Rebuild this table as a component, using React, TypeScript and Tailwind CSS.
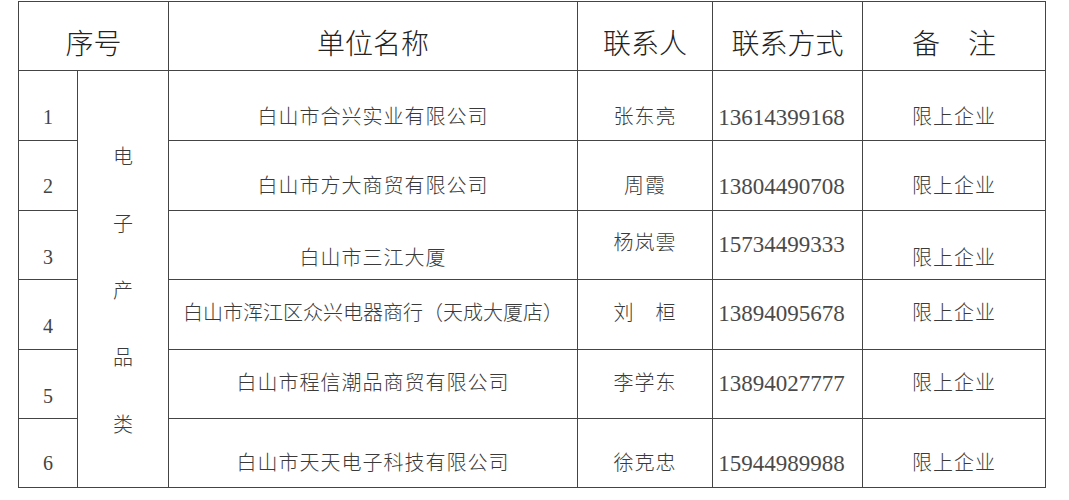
const serif = "font-[family-name:'Liberation_Serif','Noto_Sans_CJK_SC',serif]";

type Row = {
  no: string;
  name: string;
  person: string;
  phone: string;
  note: string;
  // padding-top for each cell (number, name, person, phone, note)
  pad: [string, string, string, string, string];
};

const rows: Row[] = [
  { no: '1', name: '白山市合兴实业有限公司', person: '张东亮', phone: '13614399168', note: '限上企业', pad: ['pt-[36px]', 'pt-[36px]', 'pt-[36px]', 'pt-[35px]', 'pt-[36px]'] },
  { no: '2', name: '白山市方大商贸有限公司', person: '周霞', phone: '13804490708', note: '限上企业', pad: ['pt-[35px]', 'pt-[35px]', 'pt-[35px]', 'pt-[34px]', 'pt-[35px]'] },
  { no: '3', name: '白山市三江大厦', person: '杨岚雲', phone: '15734499333', note: '限上企业', pad: ['pt-[36px]', 'pt-[37px]', 'pt-[22px]', 'pt-[22px]', 'pt-[37px]'] },
  { no: '4', name: '白山市浑江区众兴电器商行（天成大厦店）', person: '刘　桓', phone: '13894095678', note: '限上企业', pad: ['pt-[36px]', 'pt-[23px]', 'pt-[23px]', 'pt-[22px]', 'pt-[23px]'] },
  { no: '5', name: '白山市程信潮品商贸有限公司', person: '李学东', phone: '13894027777', note: '限上企业', pad: ['pt-[36px]', 'pt-[23px]', 'pt-[23px]', 'pt-[22px]', 'pt-[23px]'] },
  { no: '6', name: '白山市天天电子科技有限公司', person: '徐克忠', phone: '15944989988', note: '限上企业', pad: ['pt-[34px]', 'pt-[34px]', 'pt-[34px]', 'pt-[33px]', 'pt-[34px]'] },
];

const cell = 'flex justify-center border-r border-b border-[#444]';
const body = 'text-[20px] leading-none tracking-[1px] text-[#3a3a3a] font-light';
const head = 'text-[28px] leading-none text-[#222] font-light pt-[29px]';

export default function App() {
  return (
    <div className={`w-[1069px] h-[500px] bg-white pt-px pl-[18px] ${serif}`}>
      <div className="grid w-[1028px] grid-cols-[59px_91px_409px_135px_150px_183px] grid-rows-[69px_70px_70px_69px_70px_69px_69px] border-l border-t border-[#444]">
        <div className={`${cell} col-span-2`}>
          <span className={head}>序号</span>
        </div>
        <div className={cell}>
          <span className={head}>单位名称</span>
        </div>
        <div className={cell}>
          <span className={head}>联系人</span>
        </div>
        <div className={cell}>
          <span className={head}>联系方式</span>
        </div>
        <div className={cell}>
          <span className={head}>备　注</span>
        </div>

        {rows.map((r, i) => (
          <div key={r.no} className="contents">
            <div className={`${cell} ${r.pad[0]}`}>
              <span className="text-[20px] leading-none text-[#444]">{r.no}</span>
            </div>
            {i === 0 && (
              <div className={`${cell} row-span-6 flex-col items-center justify-start gap-[47px] pt-[76px]`}>
                {['电', '子', '产', '品', '类'].map((c) => (
                  <span key={c} className="text-[20px] leading-none text-[#3a3a3a] font-light">{c}</span>
                ))}
              </div>
            )}
            <div className={`${cell} ${r.pad[1]}`}>
              <span className={r.no === '4' ? 'text-[20px] leading-none text-[#3a3a3a] font-light' : body}>{r.name}</span>
            </div>
            <div className={`${cell} ${r.pad[2]}`}>
              <span className={body}>{r.person}</span>
            </div>
            <div className={`${cell} ${r.pad[3]} pr-[12px]`}>
              <span className="text-[23px] leading-none text-[#4a4a4a]">{r.phone}</span>
            </div>
            <div className={`${cell} ${r.pad[4]}`}>
              <span className={body}>{r.note}</span>
            </div>
          </div>
        ))}
      </div>
    </div>
  );
}
